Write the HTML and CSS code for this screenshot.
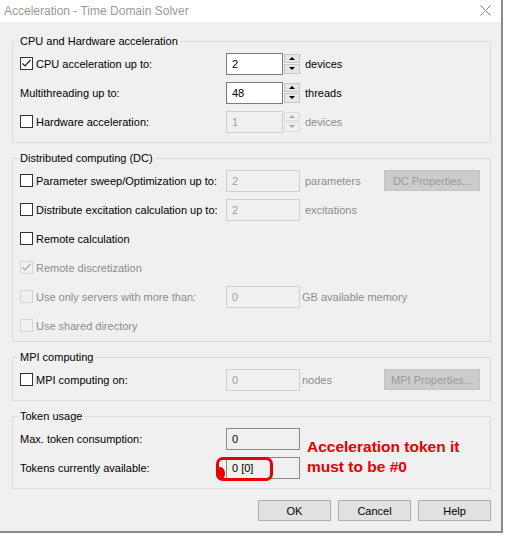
FILE: index.html
```html
<!DOCTYPE html>
<html lang="en">
<head>
    <meta charset="UTF-8" />
    <title>Acceleration - Time Domain Solver</title>
<link rel="stylesheet" href="styles.css">
</head>
<body>
<div class="window">
    <div class="titlebar">
        <span class="title">Acceleration - Time Domain Solver</span>
        <svg class="close" width="11" height="11" viewBox="0 0 11 11"><path d="M0.5 0.5L10.5 10.5M10.5 0.5L0.5 10.5" stroke="#8a8a8a" stroke-width="1" fill="none"/></svg>
    </div>
    <div class="content">
        <fieldset class="group g1">
            <legend>CPU and Hardware acceleration</legend>
            <div class="row">
                <span class="check"><span class="box"><svg width="11" height="11" viewBox="0 0 11 11"><path d="M1.5 5.5L4 8L9.5 2" stroke="#222" stroke-width="1.2" fill="none"/></svg></span>CPU acceleration up to:</span>
                <div class="spin"><span class="edit">2</span><span class="arrows"><span class="up"></span><span class="down"></span></span></div>
                <span class="unit">devices</span>
            </div>
            <div class="row">
                <span>Multithreading up to:</span>
                <div class="spin"><span class="edit">48</span><span class="arrows"><span class="up"></span><span class="down"></span></span></div>
                <span class="unit">threads</span>
            </div>
            <div class="row">
                <span class="check"><span class="box"></span>Hardware acceleration:</span>
                <div class="spin off"><span class="edit">1</span><span class="arrows"><span class="up"></span><span class="down"></span></span></div>
                <span class="unit gray">devices</span>
            </div>
        </fieldset>

        <fieldset class="group g2">
            <legend>Distributed computing (DC)</legend>
            <div class="row">
                <span class="check"><span class="box"></span>Parameter sweep/Optimization up to:</span>
                <span class="edit off">2</span>
                <span class="unit gray">parameters</span>
                <span class="pbtn">DC Properties...</span>
            </div>
            <div class="row">
                <span class="check"><span class="box"></span>Distribute excitation calculation up to:</span>
                <span class="edit off">2</span>
                <span class="unit gray">excitations</span>
            </div>
            <div class="row">
                <span class="check wide"><span class="box"></span>Remote calculation</span>
            </div>
            <div class="row gray">
                <span class="check wide"><span class="box dis"><svg width="11" height="11" viewBox="0 0 11 11"><path d="M1.5 5.5L4 8L9.5 2" stroke="#a8a8a8" stroke-width="1.2" fill="none"/></svg></span>Remote discretization</span>
            </div>
            <div class="row gray">
                <span class="check"><span class="box dis"></span>Use only servers with more than:</span>
                <span class="edit off">0</span>
                <span class="unit near span2">GB available memory</span>
            </div>
            <div class="row gray">
                <span class="check wide"><span class="box dis"></span>Use shared directory</span>
            </div>
        </fieldset>

        <fieldset class="group g3">
            <legend>MPI computing</legend>
            <div class="row">
                <span class="check"><span class="box"></span>MPI computing on:</span>
                <span class="edit off">0</span>
                <span class="unit near gray">nodes</span>
                <span class="pbtn">MPI Properties...</span>
            </div>
        </fieldset>

        <fieldset class="group g4">
            <legend>Token usage</legend>
            <div class="tokens">
                <span>Max. token consumption:</span>
                <span class="edit ro">0</span>
                <div class="note">Acceleration token it<br>must to be #0</div>
                <span class="second">Tokens currently available:</span>
                <div class="mark-wrap">
                    <span class="edit ro">0 [0]</span>
                    <span class="mark"></span>
                    <span class="blob"></span>
                </div>
            </div>
        </fieldset>

        <div class="buttons">
            <span class="btn">OK</span>
            <span class="btn">Cancel</span>
            <span class="btn">Help</span>
        </div>
    </div>
</div>
</body>
</html>
```

FILE: styles.css
```css
* {margin: 0; padding: 0; box-sizing: border-box;}
body {
    background: #fff;
    font: 11px "Liberation Sans", Arial, sans-serif;
    color: #000;
}
.window {
    width: 503px;
    height: 533px;
    background: #f0f0f0;
    border-right: 2px solid #8c8c8c;
    border-bottom: 2px solid #8c8c8c;
}
.titlebar {
    height: 22px;
    background: #fff;
    display: flex;
    align-items: center;
    justify-content: space-between;
    padding: 0 10px 0 4px;
}
.title {font-size: 12px; color: #999;}
.close {margin-top: -2px;}

.content {padding: 11px 10px 0 12px;}
.group {
    border: 1px solid #dcdcdc;
    padding: 0 10px 6px 7px;
}
.group + .group {margin-top: 7px;}
.g2 {padding-bottom: 1px;}
.group legend {
    line-height: 16px;
    padding: 0 2px;
    margin-left: -2px;
}

.row {
    display: grid;
    grid-template-columns: 206px 74px 84px 96px;
    height: 29px;
    align-items: center;
    white-space: nowrap;
}
.wide {grid-column: 1 / 5;}
.span2 {grid-column: 3 / 5;}
.unit {padding-left: 5px;}
.unit.near {padding-left: 2px;}
.gray {color: #8d8d8d;}

.check {display: flex; align-items: center;}
.box {
    width: 13px;
    height: 13px;
    border: 1px solid #333;
    background: #fff;
    margin-right: 3px;
    display: flex;
}
.box.dis {border-color: #d4d4d4; background: #f0f0f0;}

.edit {
    display: block;
    height: 22px;
    line-height: 20px;
    border: 1px solid #7a7a7a;
    background: #fff;
    padding-left: 5px;
}
.edit.off {border-color: #cfcfcf; background: #f0f0f0; color: #a0a0a0;}
.edit.ro {background: #f0f0f0; border-color: #8a8a8a; width: 74px;}

.spin {display: flex; height: 22px;}
.spin .edit {width: 57px;}
.spin.off .edit {border-color: #cfcfcf; background: #f0f0f0; color: #a0a0a0;}
.arrows {
    width: 17px;
    display: flex;
    flex-direction: column;
    gap: 1px;
    padding: 1px 0 1px 1px;
}
.arrows span {
    flex: 1;
    background: #e6e6e6;
    border: 1px solid #c6c6c6;
    display: flex;
    align-items: center;
    justify-content: center;
}
.arrows .up::before {
    content: "";
    border-left: 3px solid transparent;
    border-right: 3px solid transparent;
    border-bottom: 3px solid #000;
}
.arrows .down::before {
    content: "";
    border-left: 3px solid transparent;
    border-right: 3px solid transparent;
    border-top: 3px solid #000;
}
.spin.off .arrows span {background: #efefef; border-color: #dcdcdc;}
.spin.off .arrows .up::before {border-bottom-color: #a8a8a8;}
.spin.off .arrows .down::before {border-top-color: #a8a8a8;}

.pbtn {
    height: 21px;
    background: #cccccc;
    border: 1px solid #c2c2c2;
    color: #9a9a9a;
    display: flex;
    align-items: center;
    justify-content: center;
}

.tokens {
    display: grid;
    grid-template-columns: 206px 74px 1fr;
    grid-template-rows: 29px 29px;
    align-items: center;
}
.note {
    grid-column: 3;
    grid-row: 1 / 3;
    align-self: start;
    padding: 13px 0 0 7px;
    font: bold 15.5px/20px "Liberation Sans", Arial, sans-serif;
    color: #e60000;
}
.tokens .second {grid-row: 2; grid-column: 1;}
.mark-wrap {position: relative; grid-row: 2; grid-column: 2;}
.mark {
    position: absolute;
    left: -10px;
    top: 0;
    width: 57px;
    height: 24px;
    border: 3px solid #e60000;
    border-radius: 7px;
}
.blob {
    position: absolute;
    left: -10px;
    top: 10px;
    width: 9px;
    height: 13px;
    border-radius: 50%;
    background: #e60000;
}

.buttons {
    display: flex;
    justify-content: flex-end;
    gap: 7px;
    margin-top: 11px;
}
.btn {
    width: 73px;
    height: 21px;
    background: #e1e1e1;
    border: 1px solid #adadad;
    display: flex;
    align-items: center;
    justify-content: center;
}
```
